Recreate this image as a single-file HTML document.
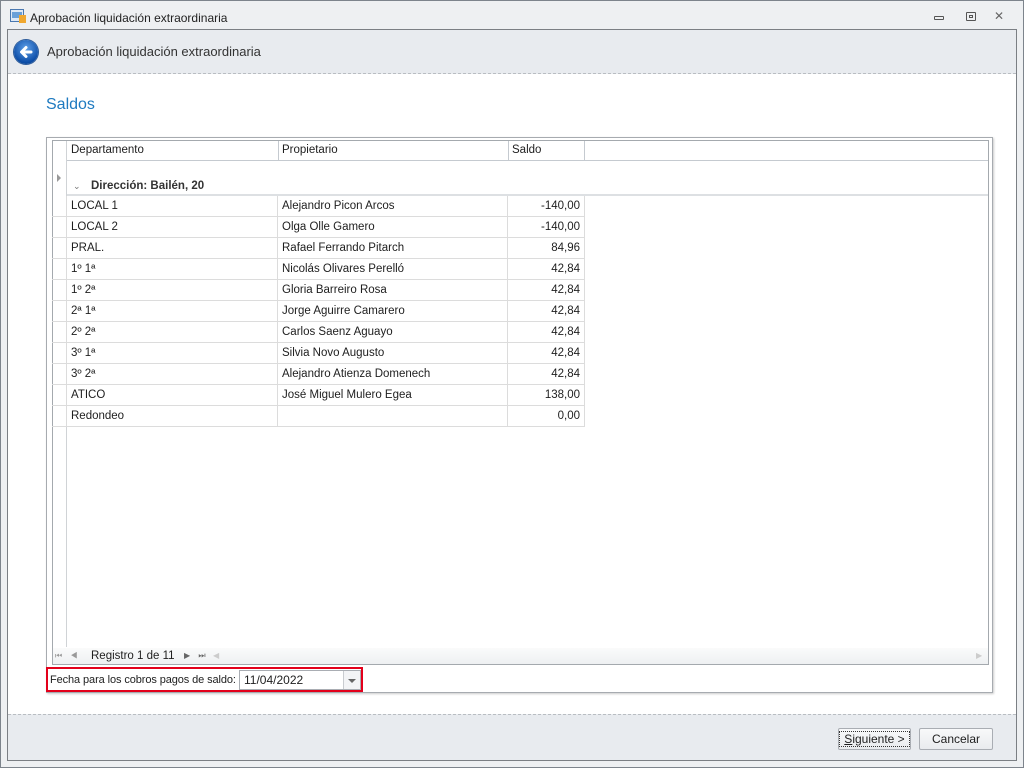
<!DOCTYPE html>
<html><head><meta charset="utf-8"><style>
*{margin:0;padding:0;box-sizing:border-box}
body{width:1024px;height:768px;overflow:hidden;background:#e9ecef;font-family:"Liberation Sans",sans-serif;font-size:11.5px;color:#1e1e1e;position:relative}
.abs{position:absolute}
#win{left:0;top:0;width:1024px;height:768px;border:1px solid #7d848c;background:#eef0f2}
#frame{left:7px;top:29px;width:1010px;height:732px;border:1px solid #7b7f84;background:#fff}
#hdr{left:0;top:0;width:1008px;height:44px;background:#e8ebef;border-bottom:1px dashed #b9bdc2}
#ftr{left:0;top:684px;width:1008px;height:46px;background:#e8ebef;border-top:1px dashed #b9bdc2}
.row{position:absolute;left:0;height:21px;width:533px;border-bottom:1px solid #dcdcdc}
.c{position:absolute;top:0;height:21px;line-height:21px;padding-left:4px;border-right:1px solid #dcdcdc}
.btn{position:absolute;top:728px;height:22px;border:1px solid #a9adb3;border-radius:2px;background:linear-gradient(#f8f9fa,#e9ebee);text-align:center;line-height:20px;font-size:12px}
</style></head><body>
<div id="win" class="abs"></div>
<div class="abs" style="left:10px;top:9px;width:14px;height:13px;border:1px solid #4a78b0;background:#dfe9f5"></div>
<div class="abs" style="left:12px;top:12px;width:10px;height:6px;background:#6aa0d8"></div>
<div class="abs" style="left:19px;top:15px;width:7px;height:8px;background:#f0a830"></div>
<div class="abs" style="left:30px;top:11px;font-size:12px;color:#222">Aprobación liquidación extraordinaria</div>
<div class="abs" style="left:934px;top:16px;width:10px;height:4px;border:1px solid #555;border-radius:1px"></div>
<div class="abs" style="left:966px;top:12px;width:10px;height:9px;border:1px solid #555;border-radius:1px"><div style="margin:2px;height:3px;border:1px solid #555"></div></div>
<div class="abs" style="left:994px;top:9px;font-size:12px;color:#666">✕</div>
<div id="frame" class="abs">
 <div id="hdr" class="abs"></div>
 <div id="ftr" class="abs"></div>
</div>
<div class="abs" style="left:14px;top:40px;width:24px;height:24px;border-radius:50%;background:radial-gradient(circle at 50% 35%,#5fa0e8,#0d4ea8 70%,#083a80);box-shadow:0 0 0 1px #2a5a9a"></div>
<svg class="abs" style="left:14px;top:40px" width="24" height="24"><path d="M17 12H8M12 7.5L7.5 12L12 16.5" stroke="#fff" stroke-width="3" fill="none" stroke-linecap="round" stroke-linejoin="round"/></svg>
<div class="abs" style="left:47px;top:44px;font-size:13px;color:#333">Aprobación liquidación extraordinaria</div>
<div class="abs" style="left:46px;top:96px;font-size:16px;color:#1e7ac0">Saldos</div>
<div class="abs" style="left:46px;top:137px;width:947px;height:556px;border:1px solid #a7abb0;box-shadow:1px 1px 2px #ccc;background:#fff"></div>
<div class="abs" style="left:52px;top:140px;width:937px;height:525px;border:1px solid #a4a9ae;background:#fff"></div>
<div class="abs" style="left:53px;top:141px;width:935px;height:20px;background:#fff;border-bottom:1px solid #c5cad0"></div>
<div class="abs" style="left:53px;top:141px;width:14px;height:506px;background:#fff;border-right:1px solid #d0d3d6"></div>
<div class="abs" style="left:67px;top:141px;width:212px;height:20px;border-right:1px solid #c5cad0;padding:3px 4px">Departamento</div>
<div class="abs" style="left:279px;top:141px;width:230px;height:20px;border-right:1px solid #c5cad0;padding:3px 3px">Propietario</div>
<div class="abs" style="left:509px;top:141px;width:76px;height:20px;border-right:1px solid #c5cad0;padding:3px 3px">Saldo</div>
<div class="abs" style="left:57px;top:174px;width:0;height:0;border-left:4px solid #999;border-top:4px solid transparent;border-bottom:4px solid transparent"></div>
<div class="abs" style="left:73px;top:181px;font-size:9px;color:#777">⌄</div>
<div class="abs" style="left:91px;top:180px;font-weight:bold;color:#333">Dirección: Bailén, 20</div>
<div class="abs" style="left:67px;top:194px;width:921px;height:2px;background:#dde0e3"></div>
<div class="abs" style="left:52px;top:196px;">
<div class="row" style="top:0"><div class="c" style="left:0;width:15px"></div><div class="c" style="left:15px;width:211px">LOCAL 1</div><div class="c" style="left:226px;width:230px">Alejandro Picon Arcos</div><div class="c" style="left:456px;width:77px;text-align:right;padding-right:4px">-140,00</div></div>
<div class="row" style="top:21px"><div class="c" style="left:0;width:15px"></div><div class="c" style="left:15px;width:211px">LOCAL 2</div><div class="c" style="left:226px;width:230px">Olga Olle Gamero</div><div class="c" style="left:456px;width:77px;text-align:right;padding-right:4px">-140,00</div></div>
<div class="row" style="top:42px"><div class="c" style="left:0;width:15px"></div><div class="c" style="left:15px;width:211px">PRAL.</div><div class="c" style="left:226px;width:230px">Rafael Ferrando Pitarch</div><div class="c" style="left:456px;width:77px;text-align:right;padding-right:4px">84,96</div></div>
<div class="row" style="top:63px"><div class="c" style="left:0;width:15px"></div><div class="c" style="left:15px;width:211px">1º 1ª</div><div class="c" style="left:226px;width:230px">Nicolás Olivares Perelló</div><div class="c" style="left:456px;width:77px;text-align:right;padding-right:4px">42,84</div></div>
<div class="row" style="top:84px"><div class="c" style="left:0;width:15px"></div><div class="c" style="left:15px;width:211px">1º 2ª</div><div class="c" style="left:226px;width:230px">Gloria Barreiro Rosa</div><div class="c" style="left:456px;width:77px;text-align:right;padding-right:4px">42,84</div></div>
<div class="row" style="top:105px"><div class="c" style="left:0;width:15px"></div><div class="c" style="left:15px;width:211px">2ª 1ª</div><div class="c" style="left:226px;width:230px">Jorge Aguirre Camarero</div><div class="c" style="left:456px;width:77px;text-align:right;padding-right:4px">42,84</div></div>
<div class="row" style="top:126px"><div class="c" style="left:0;width:15px"></div><div class="c" style="left:15px;width:211px">2º 2ª</div><div class="c" style="left:226px;width:230px">Carlos Saenz Aguayo</div><div class="c" style="left:456px;width:77px;text-align:right;padding-right:4px">42,84</div></div>
<div class="row" style="top:147px"><div class="c" style="left:0;width:15px"></div><div class="c" style="left:15px;width:211px">3º 1ª</div><div class="c" style="left:226px;width:230px">Silvia Novo Augusto</div><div class="c" style="left:456px;width:77px;text-align:right;padding-right:4px">42,84</div></div>
<div class="row" style="top:168px"><div class="c" style="left:0;width:15px"></div><div class="c" style="left:15px;width:211px">3º 2ª</div><div class="c" style="left:226px;width:230px">Alejandro Atienza Domenech</div><div class="c" style="left:456px;width:77px;text-align:right;padding-right:4px">42,84</div></div>
<div class="row" style="top:189px"><div class="c" style="left:0;width:15px"></div><div class="c" style="left:15px;width:211px">ATICO</div><div class="c" style="left:226px;width:230px">José Miguel Mulero Egea</div><div class="c" style="left:456px;width:77px;text-align:right;padding-right:4px">138,00</div></div>
<div class="row" style="top:210px"><div class="c" style="left:0;width:15px"></div><div class="c" style="left:15px;width:211px">Redondeo</div><div class="c" style="left:226px;width:230px"></div><div class="c" style="left:456px;width:77px;text-align:right;padding-right:4px">0,00</div></div>
</div>
<div class="abs" style="left:53px;top:648px;width:935px;height:16px;background:linear-gradient(#fafbfb,#eef0f2)"></div>
<div class="abs" style="left:55px;top:651px;font-size:8px;color:#999;letter-spacing:3px">⏮ ◀</div>
<div class="abs" style="left:91px;top:650px;font-size:11.5px">Registro 1 de 11</div>
<div class="abs" style="left:184px;top:651px;font-size:8px;color:#666;letter-spacing:3px">▶ ⏭</div>
<div class="abs" style="left:213px;top:651px;font-size:8px;color:#ccc">◀</div>
<div class="abs" style="left:976px;top:651px;font-size:8px;color:#ccc">▶</div>
<div class="abs" style="left:46px;top:667px;width:317px;height:25px;border:2px solid #e3001b"></div>
<div class="abs" style="left:50px;top:674px;font-size:11px;letter-spacing:-0.1px">Fecha para los cobros pagos de saldo:</div>
<div class="abs" style="left:239px;top:670px;width:122px;height:20px;border:1px solid #a9adb3;background:#fff;padding:2px 4px;font-size:12px">11/04/2022</div>
<div class="abs" style="left:343px;top:671px;width:17px;height:18px;border-left:1px solid #c9ccd0;background:#f3f4f6"></div>
<div class="abs" style="left:348px;top:679px;width:0;height:0;border-top:4px solid #666;border-left:4px solid transparent;border-right:4px solid transparent"></div>
<div class="btn" style="left:838px;width:73px"><span style="border:1px dotted #333;padding:0 4px"><u>S</u>iguiente &gt;</span></div>
<div class="btn" style="left:919px;width:74px">Cancelar</div>
</body></html>
